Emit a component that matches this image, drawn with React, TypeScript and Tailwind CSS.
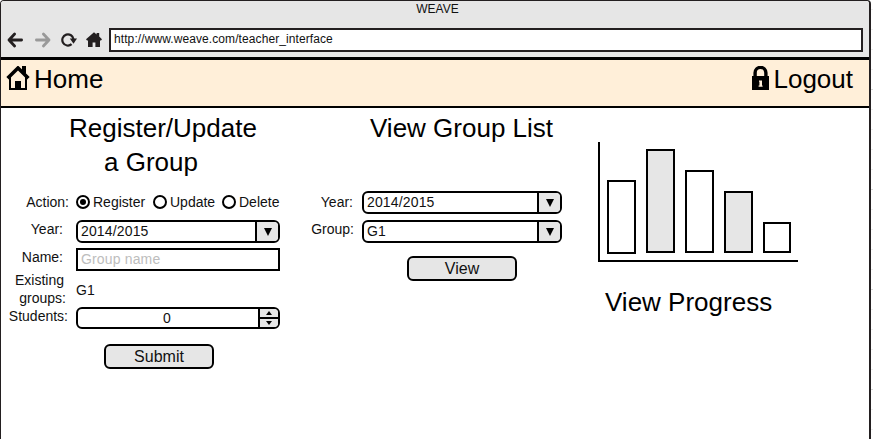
import type { ReactNode } from "react";

function ArrowIcon({ className }: { className: string }) {
  return (
    <svg width="16" height="16" viewBox="0 0 16 16" className={className} fill="none" stroke="currentColor" strokeWidth="2.8">
      <path d="M7.6 2 2 8l5.6 6M2 8h12.6" strokeLinejoin="round" strokeLinecap="round" />
    </svg>
  );
}

function ReloadIcon() {
  return (
    <svg width="16" height="16" viewBox="0 0 16 16" className="text-[#231f20]">
      <path d="M10.6 12.2A5.6 5.6 0 1 1 12.5 7.4" fill="none" stroke="currentColor" strokeWidth="2.2" />
      <path d="M8.8 6.6H16l-3.5 5.2z" fill="currentColor" />
    </svg>
  );
}

function SmallHomeIcon() {
  return (
    <svg width="16" height="16" viewBox="0 0 16 16" fill="#231f20">
      <path d="M8 .2 10.6 2.4V1h2.6v3.6L16 7.2 15 8.6h-1V15H9.4v-4.4H6.6V15H2V8.6H1L0 7.2z" />
    </svg>
  );
}

function HomeIcon() {
  return (
    <svg width="24" height="24" viewBox="0 0 24 24">
      <path d="M1.6 12.2 12 2l10.4 10.2" fill="none" stroke="#000" strokeWidth="3.6" />
      <path d="M16 0h4v8l-4-3z" />
      <path d="M4 11v12h16V11" fill="none" stroke="#000" strokeWidth="2" />
      <path d="M9 15h6v8H9z" />
    </svg>
  );
}

function LockIcon() {
  return (
    <svg width="17" height="24" viewBox="0 0 17 24">
      <path d="M3.1 11V6.8a5.4 5.4 0 0 1 10.8 0V11" fill="none" stroke="#000" strokeWidth="3.4" />
      <path d="M0 10h17v14H0z" />
      <path d="M7 14.4h3v5.2h.6v1.2H6.6v-1.2h.8v-3.8H7z" fill="#ffefd9" />
    </svg>
  );
}

function Select({ value, className }: { value: string; className: string }) {
  return (
    <div className={"flex h-[23px] overflow-hidden rounded-[6px] border-2 border-black bg-white " + className}>
      <span className="flex-1 pl-[3px] leading-[19px] tracking-[0.15px]">{value}</span>
      <span className="flex w-[23px] items-center justify-center border-l-2 border-black bg-[#e6e6e6]">
        <svg width="8" height="8" viewBox="0 0 8 8">
          <path d="M0 0h8L4 8z" />
        </svg>
      </span>
    </div>
  );
}

function Radio({ label, checked, className }: { label: string; checked?: boolean; className: string }) {
  return (
    <div className={"flex items-center gap-[3px] " + className}>
      <span className="flex size-[14px] items-center justify-center rounded-full border-2 border-black bg-white">
        {checked && <span className="size-[6px] rounded-full bg-black" />}
      </span>
      <span className="leading-[18px]">{label}</span>
    </div>
  );
}

function Button({ children, className }: { children: ReactNode; className: string }) {
  return (
    <button
      className={"block h-[25px] w-[110px] rounded-[6px] border-2 border-black bg-[#e6e6e6] text-center text-base leading-5 " + className}
    >
      {children}
    </button>
  );
}

const bars = [
  { height: 74, className: "w-[29px] bg-white -mb-px" },
  { height: 104, className: "w-[29px] bg-[#e6e6e6]" },
  { height: 83, className: "w-[29px] bg-white" },
  { height: 62, className: "w-[29px] bg-[#e6e6e6]" },
  { height: 31, className: "w-[28px] bg-white" },
];

const ticks = Array.from({ length: 22 }, (_, i) => i);

export default function App() {
  return (
    <div className="flex h-[439px] w-[873px] overflow-hidden bg-white font-['Liberation_Sans',Arial,sans-serif] text-sm text-[#111]">
      <div className="flex w-[871px] flex-col rounded-t-[4px] border-t border-r-2 border-l border-[#231f20]">
        <header className="h-14 rounded-t-[3px] bg-[#e6e6e6]">
          <div className="h-[27px] pt-px pl-[5px] text-center text-xs leading-[14px]">WEAVE</div>
          <div className="flex h-6 items-center pr-[6px] pl-[6px]">
            <ArrowIcon className="text-[#231f20]" />
            <ArrowIcon className="ml-3 rotate-180 text-[#999]" />
            <span className="ml-[10px]">
              <ReloadIcon />
            </span>
            <span className="ml-[9px]">
              <SmallHomeIcon />
            </span>
            <div className="ml-[7px] h-6 flex-1 border-2 border-[#231f20] bg-white pl-[3px] text-xs leading-[18px] tracking-[0.09px]">
              http://www.weave.com/teacher_interface
            </div>
          </div>
        </header>

        <nav className="flex h-[51px] justify-between border-t-3 border-b-2 border-black bg-[#ffefd9] pt-1 pr-4 pl-[5px] text-[26px] leading-[30px] text-black">
          <a className="flex">
            <span className="mt-[2px] mr-1">
              <HomeIcon />
            </span>
            Home
          </a>
          <a className="flex">
            <span className="mt-[2px] mr-1">
              <LockIcon />
            </span>
            Logout
          </a>
        </nav>

        <main className="flex flex-1">
          <section className="w-[290px] pt-[3px]">
            <h1 className="pl-[68px] text-[26px] leading-[34px] text-black">
              Register/Update
              <span className="block pl-[35px]">a Group</span>
            </h1>
            <div className="mt-[14px] flex h-[27px]">
              <span className="w-[75px] pr-[7px] text-right leading-[18px]">Action:</span>
              <div className="flex h-[18px]">
                <Radio label="Register" checked className="w-[77px]" />
                <Radio label="Update" className="w-[69px]" />
                <Radio label="Delete" className="w-[60px]" />
              </div>
            </div>
            <div className="flex h-7">
              <span className="w-[75px] pr-[13px] text-right leading-[18px]">Year:</span>
              <Select value="2014/2015" className="w-[204px]" />
            </div>
            <div className="flex h-[23px]">
              <span className="w-[75px] pr-[13px] text-right leading-[18px]">Name:</span>
              <div className="h-[23px] w-[204px] border-2 border-black pl-[3px] leading-[19px] tracking-[0.15px] text-[#bdbdbd]">
                Group name
              </div>
            </div>
            <div className="flex h-9">
              <span className="w-[75px] pr-[10px] text-right leading-[18px]">
                <span className="mr-[2px]">Existing</span>
                <br />
                groups:
              </span>
              <span className="pt-[10px] leading-[18px]">G1</span>
            </div>
            <div className="flex h-[37px]">
              <span className="w-[75px] pr-2 text-right leading-[18px]">Students:</span>
              <div className="flex h-[22px] w-[204px] overflow-hidden rounded-[6px] border-2 border-black">
                <span className="flex-1 pr-[2px] text-center leading-[18px]">0</span>
                <span className="flex w-[20px] flex-col border-l-2 border-black bg-[#e6e6e6]">
                  <span className="flex h-2 items-center justify-center">
                    <svg width="6" height="4" viewBox="0 0 6 4">
                      <path d="M0 4h6L3 0z" />
                    </svg>
                  </span>
                  <span className="flex flex-1 items-center justify-center border-t-2 border-black">
                    <svg width="6" height="4" viewBox="0 0 6 4">
                      <path d="M0 0h6L3 4z" />
                    </svg>
                  </span>
                </span>
              </div>
            </div>
            <Button className="ml-[103px]">Submit</Button>
          </section>

          <section className="w-[307px] pt-[3px]">
            <h1 className="pl-[79px] text-[26px] leading-[34px] text-black">View Group List</h1>
            <div className="mt-[46px] flex h-[29px]">
              <span className="w-[71px] pt-[2px] pr-[9px] text-right leading-[18px]">Year:</span>
              <Select value="2014/2015" className="w-[200px]" />
            </div>
            <div className="flex h-9">
              <span className="w-[71px] pr-2 text-right leading-[18px]">Group:</span>
              <Select value="G1" className="w-[200px]" />
            </div>
            <Button className="ml-[116px]">View</Button>
          </section>

          <section className="pt-[34px]">
            <div className="flex h-[120px] w-[200px] items-end gap-[10px] border-b-2 border-l-2 border-black pb-[7px] pl-[7px]">
              {bars.map((bar) => (
                <div key={bar.height} className={"border-2 border-black " + bar.className} style={{ height: bar.height }} />
              ))}
            </div>
            <h1 className="mt-[23px] pl-[7px] text-[26px] leading-[34px] text-black">View Progress</h1>
          </section>
        </main>
      </div>
      <div className="-mt-[10px] w-[2px]">
        {ticks.map((i) => (
          <div key={i} className={i % 5 === 4 ? "h-5 border-b border-[#d8d8d8]" : "h-5 border-b border-[#eeeeee]"} />
        ))}
      </div>
    </div>
  );
}
